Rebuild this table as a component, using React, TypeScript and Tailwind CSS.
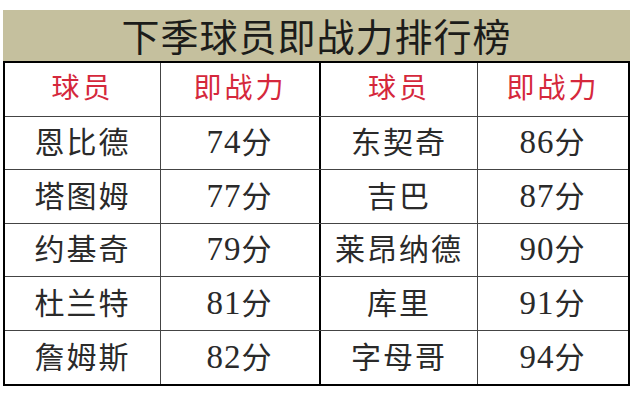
const rows: [string, string, string, string][] = [
  ['恩比德', '74', '东契奇', '86'],
  ['塔图姆', '77', '吉巴', '87'],
  ['约基奇', '79', '莱昂纳德', '90'],
  ['杜兰特', '81', '库里', '91'],
  ['詹姆斯', '82', '字母哥', '94'],
];

const cjk = "font-['Liberation_Serif','Noto_Sans_CJK_SC',serif]";

function Cell({ text, head, mid, last, score }: { text: string; head?: boolean; mid?: boolean; last?: boolean; score?: boolean }) {
  return (
    <div
      className={`flex items-center justify-center ${mid ? 'border-r-2 border-r-black' : last ? '' : 'border-r border-r-[#444]'} ${
        head ? 'text-[28px] tracking-[3px] text-[#d5283c]' : 'text-[30px] tracking-[2px] text-[#2a2a2a]'
      }`}
    >
      {score ? (
        <span>
          <span className="text-[33px] tracking-[1px]">{text}</span>分
        </span>
      ) : (
        text
      )}
    </div>
  );
}

export default function App() {
  return (
    <div className={`h-[400px] w-[638px] bg-white pt-[10px] pl-[3px] ${cjk}`}>
      <div className="w-[627px]">
        <div className="flex h-[51px] items-center justify-center bg-[#c5c09e] pt-[4px] text-[38px] tracking-[1px] leading-none text-[#1c1c1a]">
          下季球员即战力排行榜
        </div>
        <div className="border-2 border-black">
          {[['球员', '即战力', '球员', '即战力'] as [string, string, string, string], ...rows].map((r, i) => (
            <div
              key={i}
              className={`grid h-[53.5px] grid-cols-[156px_160px_157px_1fr] ${i < rows.length ? 'border-b border-b-[#444]' : ''}`}
            >
              <Cell text={r[0]} head={i === 0} />
              <Cell text={r[1]} head={i === 0} mid score={i > 0} />
              <Cell text={r[2]} head={i === 0} />
              <Cell text={r[3]} head={i === 0} last score={i > 0} />
            </div>
          ))}
        </div>
      </div>
    </div>
  );
}
